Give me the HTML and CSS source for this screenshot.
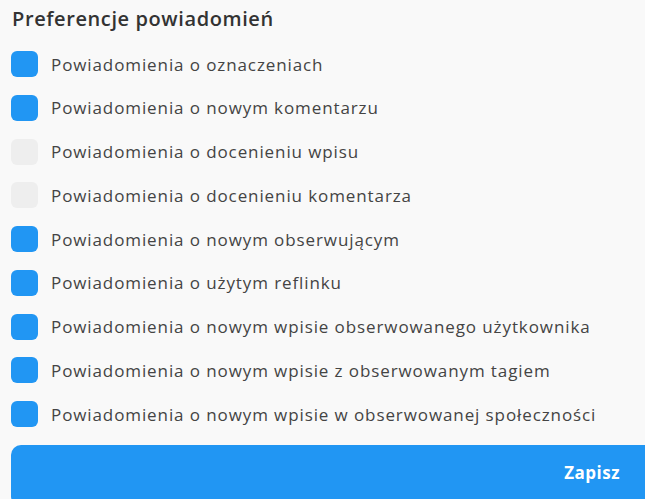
FILE: index.html
```html
<!DOCTYPE html>
<html lang="pl">
<head>
<meta charset="utf-8">
<link rel="stylesheet" href="styles.css">
</head>
<body>
<div class="panel">
  <h2 class="title">Preferencje powiadomień</h2>
  <ul class="options">
    <li class="option"><span class="box on"></span><span class="label">Powiadomienia o oznaczeniach</span></li>
    <li class="option"><span class="box on"></span><span class="label">Powiadomienia o nowym komentarzu</span></li>
    <li class="option"><span class="box"></span><span class="label">Powiadomienia o docenieniu wpisu</span></li>
    <li class="option"><span class="box"></span><span class="label">Powiadomienia o docenieniu komentarza</span></li>
    <li class="option"><span class="box on"></span><span class="label">Powiadomienia o nowym obserwującym</span></li>
    <li class="option"><span class="box on"></span><span class="label">Powiadomienia o użytym reflinku</span></li>
    <li class="option"><span class="box on"></span><span class="label">Powiadomienia o nowym wpisie obserwowanego użytkownika</span></li>
    <li class="option"><span class="box on"></span><span class="label">Powiadomienia o nowym wpisie z obserwowanym tagiem</span></li>
    <li class="option"><span class="box on"></span><span class="label">Powiadomienia o nowym wpisie w obserwowanej społeczności</span></li>
  </ul>
  <button class="save">Zapisz</button>
</div>
</body>
</html>
```
FILE: styles.css
```css
html, body {
  margin: 0;
  padding: 0;
  background: #f9f9f9;
  overflow: hidden;
}
body {
  font-family: "Open Sans", "Noto Sans", sans-serif;
  color: #3a3a3a;
}
.panel {
  width: 680px;
  padding: 7px 0 0 11px;
  box-sizing: border-box;
}
.title {
  margin: 0 0 0 1px;
  font-size: 20px;
  font-weight: 600;
  letter-spacing: 0.6px;
  line-height: 24px;
  color: #333;
}
.options {
  list-style: none;
  margin: 20px 0 0 0;
  padding: 0;
  display: flex;
  flex-direction: column;
  gap: 17.75px;
}
.option {
  display: flex;
  align-items: center;
  height: 26px;
  gap: 13px;
}
.box {
  width: 27px;
  height: 26px;
  border-radius: 6px;
  background: #eeeeee;
  flex: none;
}
.box.on {
  background: #2196f3;
}
.label {
  font-size: 17px;
  letter-spacing: 0.9px;
  color: #444;
}
.save {
  margin-top: 18px;
  width: 100%;
  height: 62px;
  border: none;
  border-radius: 10px;
  background: #2196f3;
  color: #fff;
  font-family: inherit;
  font-weight: 700;
  font-size: 17px;
  letter-spacing: 0.5px;
  text-align: right;
  padding: 0 60px 8px 0;
  display: block;
}
```
